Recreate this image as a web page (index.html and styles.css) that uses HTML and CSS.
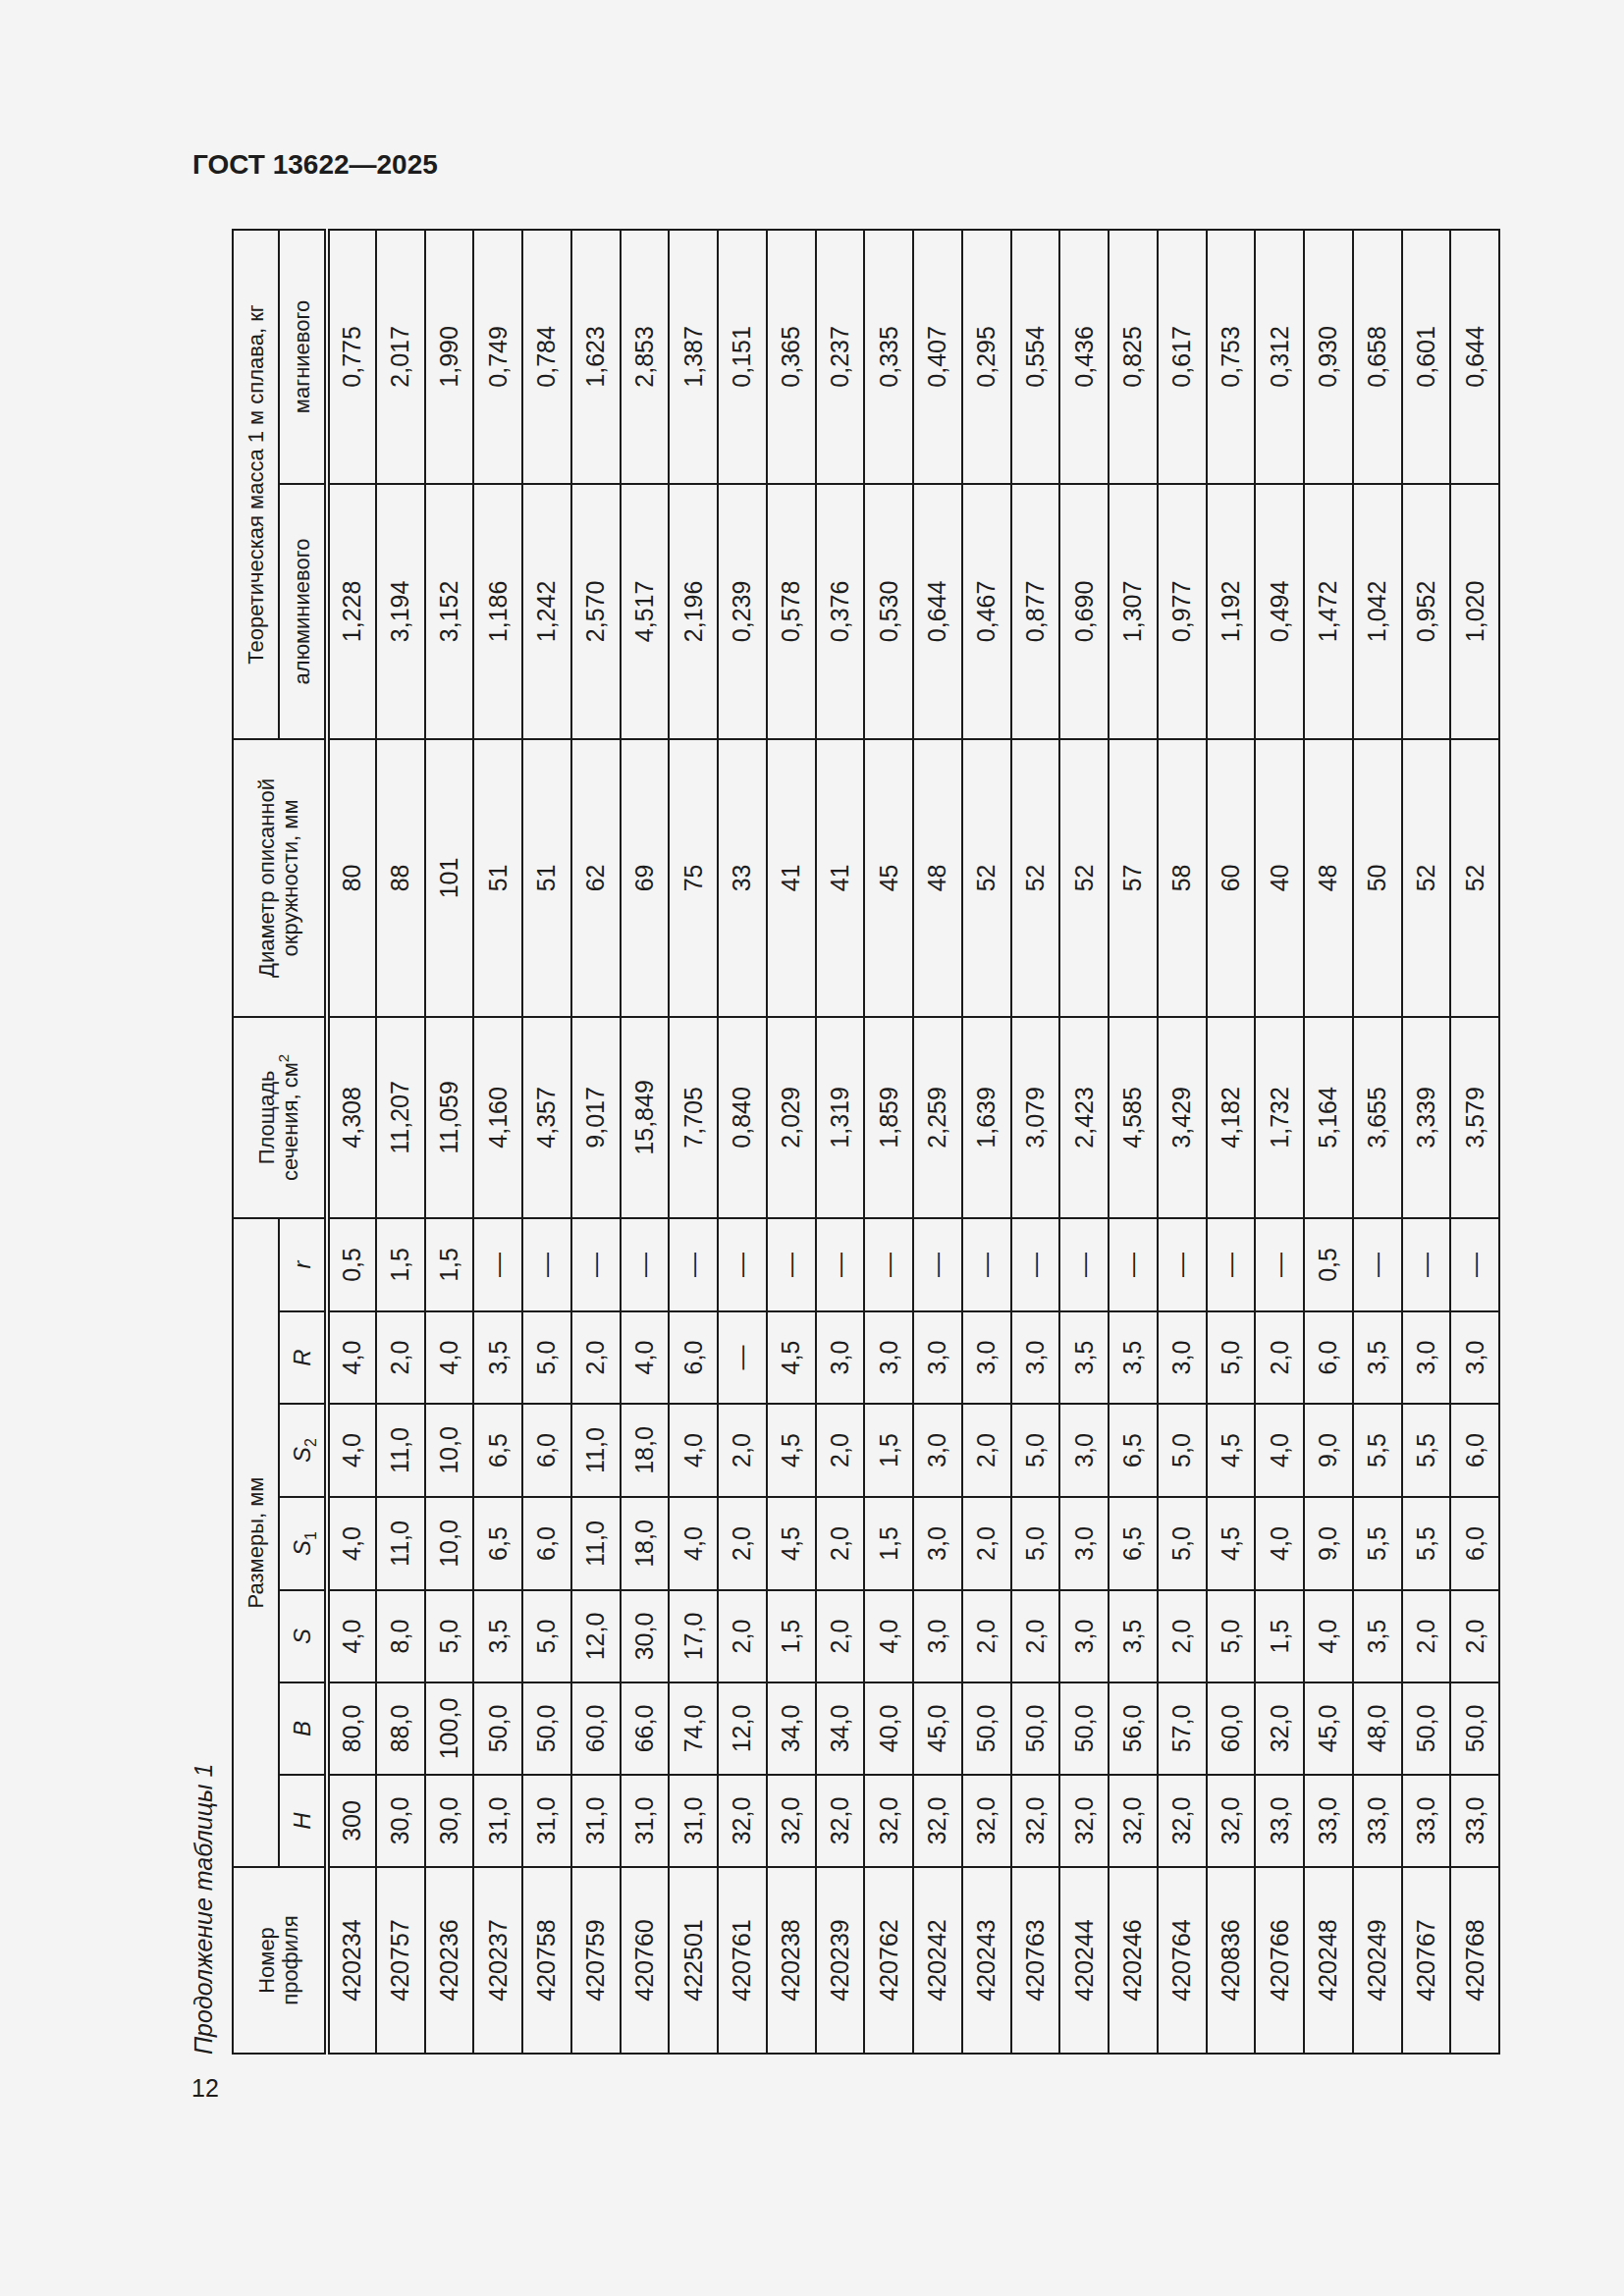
FILE: index.html
```html
<!DOCTYPE html>
<html lang="ru">
<head>
<meta charset="utf-8">
<title>ГОСТ 13622—2025</title>
<link rel="stylesheet" href="styles.css">
</head>
<body>
<div class="page">
  <h1 class="doc-title">ГОСТ 13622—2025</h1>
  <div class="rot-wrap">
    <div class="rot">
      <p class="caption">Продолжение таблицы 1</p>
      <table class="spec">
        <colgroup>
          <col class="c-num"><col class="c-d"><col class="c-d"><col class="c-d"><col class="c-d2"><col class="c-d2"><col class="c-d"><col class="c-d2">
          <col class="c-area"><col class="c-diam"><col class="c-al"><col class="c-mg">
        </colgroup>
        <thead>
          <tr class="h1">
            <th rowspan="2" class="dbl">Номер<br>профиля</th>
            <th colspan="7">Размеры, мм</th>
            <th rowspan="2" class="dbl">Площадь<br>сечения, см<sup>2</sup></th>
            <th rowspan="2" class="dbl">Диаметр описанной<br>окружности, мм</th>
            <th colspan="2">Теоретическая масса 1 м сплава, кг</th>
          </tr>
          <tr class="h2">
            <th class="sym dbl">H</th>
            <th class="sym dbl">B</th>
            <th class="sym dbl">S</th>
            <th class="sym dbl">S<sub>1</sub></th>
            <th class="sym dbl">S<sub>2</sub></th>
            <th class="sym dbl">R</th>
            <th class="sym dbl">r</th>
            <th class="dbl">алюминиевого</th>
            <th class="dbl">магниевого</th>
          </tr>
        </thead>
        <tbody>
          <tr><td>420234</td><td>300</td><td>80,0</td><td>4,0</td><td>4,0</td><td>4,0</td><td>4,0</td><td>0,5</td><td>4,308</td><td>80</td><td>1,228</td><td>0,775</td></tr>
          <tr><td>420757</td><td>30,0</td><td>88,0</td><td>8,0</td><td>11,0</td><td>11,0</td><td>2,0</td><td>1,5</td><td>11,207</td><td>88</td><td>3,194</td><td>2,017</td></tr>
          <tr><td>420236</td><td>30,0</td><td>100,0</td><td>5,0</td><td>10,0</td><td>10,0</td><td>4,0</td><td>1,5</td><td>11,059</td><td>101</td><td>3,152</td><td>1,990</td></tr>
          <tr><td>420237</td><td>31,0</td><td>50,0</td><td>3,5</td><td>6,5</td><td>6,5</td><td>3,5</td><td>—</td><td>4,160</td><td>51</td><td>1,186</td><td>0,749</td></tr>
          <tr><td>420758</td><td>31,0</td><td>50,0</td><td>5,0</td><td>6,0</td><td>6,0</td><td>5,0</td><td>—</td><td>4,357</td><td>51</td><td>1,242</td><td>0,784</td></tr>
          <tr><td>420759</td><td>31,0</td><td>60,0</td><td>12,0</td><td>11,0</td><td>11,0</td><td>2,0</td><td>—</td><td>9,017</td><td>62</td><td>2,570</td><td>1,623</td></tr>
          <tr><td>420760</td><td>31,0</td><td>66,0</td><td>30,0</td><td>18,0</td><td>18,0</td><td>4,0</td><td>—</td><td>15,849</td><td>69</td><td>4,517</td><td>2,853</td></tr>
          <tr><td>422501</td><td>31,0</td><td>74,0</td><td>17,0</td><td>4,0</td><td>4,0</td><td>6,0</td><td>—</td><td>7,705</td><td>75</td><td>2,196</td><td>1,387</td></tr>
          <tr><td>420761</td><td>32,0</td><td>12,0</td><td>2,0</td><td>2,0</td><td>2,0</td><td>—</td><td>—</td><td>0,840</td><td>33</td><td>0,239</td><td>0,151</td></tr>
          <tr><td>420238</td><td>32,0</td><td>34,0</td><td>1,5</td><td>4,5</td><td>4,5</td><td>4,5</td><td>—</td><td>2,029</td><td>41</td><td>0,578</td><td>0,365</td></tr>
          <tr><td>420239</td><td>32,0</td><td>34,0</td><td>2,0</td><td>2,0</td><td>2,0</td><td>3,0</td><td>—</td><td>1,319</td><td>41</td><td>0,376</td><td>0,237</td></tr>
          <tr><td>420762</td><td>32,0</td><td>40,0</td><td>4,0</td><td>1,5</td><td>1,5</td><td>3,0</td><td>—</td><td>1,859</td><td>45</td><td>0,530</td><td>0,335</td></tr>
          <tr><td>420242</td><td>32,0</td><td>45,0</td><td>3,0</td><td>3,0</td><td>3,0</td><td>3,0</td><td>—</td><td>2,259</td><td>48</td><td>0,644</td><td>0,407</td></tr>
          <tr><td>420243</td><td>32,0</td><td>50,0</td><td>2,0</td><td>2,0</td><td>2,0</td><td>3,0</td><td>—</td><td>1,639</td><td>52</td><td>0,467</td><td>0,295</td></tr>
          <tr><td>420763</td><td>32,0</td><td>50,0</td><td>2,0</td><td>5,0</td><td>5,0</td><td>3,0</td><td>—</td><td>3,079</td><td>52</td><td>0,877</td><td>0,554</td></tr>
          <tr><td>420244</td><td>32,0</td><td>50,0</td><td>3,0</td><td>3,0</td><td>3,0</td><td>3,5</td><td>—</td><td>2,423</td><td>52</td><td>0,690</td><td>0,436</td></tr>
          <tr><td>420246</td><td>32,0</td><td>56,0</td><td>3,5</td><td>6,5</td><td>6,5</td><td>3,5</td><td>—</td><td>4,585</td><td>57</td><td>1,307</td><td>0,825</td></tr>
          <tr><td>420764</td><td>32,0</td><td>57,0</td><td>2,0</td><td>5,0</td><td>5,0</td><td>3,0</td><td>—</td><td>3,429</td><td>58</td><td>0,977</td><td>0,617</td></tr>
          <tr><td>420836</td><td>32,0</td><td>60,0</td><td>5,0</td><td>4,5</td><td>4,5</td><td>5,0</td><td>—</td><td>4,182</td><td>60</td><td>1,192</td><td>0,753</td></tr>
          <tr><td>420766</td><td>33,0</td><td>32,0</td><td>1,5</td><td>4,0</td><td>4,0</td><td>2,0</td><td>—</td><td>1,732</td><td>40</td><td>0,494</td><td>0,312</td></tr>
          <tr><td>420248</td><td>33,0</td><td>45,0</td><td>4,0</td><td>9,0</td><td>9,0</td><td>6,0</td><td>0,5</td><td>5,164</td><td>48</td><td>1,472</td><td>0,930</td></tr>
          <tr><td>420249</td><td>33,0</td><td>48,0</td><td>3,5</td><td>5,5</td><td>5,5</td><td>3,5</td><td>—</td><td>3,655</td><td>50</td><td>1,042</td><td>0,658</td></tr>
          <tr><td>420767</td><td>33,0</td><td>50,0</td><td>2,0</td><td>5,5</td><td>5,5</td><td>3,0</td><td>—</td><td>3,339</td><td>52</td><td>0,952</td><td>0,601</td></tr>
          <tr><td>420768</td><td>33,0</td><td>50,0</td><td>2,0</td><td>6,0</td><td>6,0</td><td>3,0</td><td>—</td><td>3,579</td><td>52</td><td>1,020</td><td>0,644</td></tr>
        </tbody>
      </table>
    </div>
  </div>
  <div class="page-num">12</div>
</div>
</body>
</html>
```

FILE: styles.css
```css
* { box-sizing: border-box; }
html, body { margin: 0; padding: 0; background: #f4f4f4; }
body {
  width: 1654px;
  min-height: 2339px;
  font-family: "Liberation Sans", Arial, sans-serif;
  color: #1c1c1c;
}
.page { padding: 152px 0 0 194px; }
.doc-title {
  margin: 0 0 51px 2px;
  font-size: 28px;
  line-height: 32px;
  font-weight: bold;
}
.rot-wrap { width: 1336px; height: 1859px; }
.rot {
  width: 1858px;
  height: 1336px;
  transform-origin: 0 0;
  transform: translateY(1858px) rotate(-90deg);
}
.caption {
  margin: 0 0 16px 0;
  font-size: 25px;
  line-height: 26px;
  font-style: italic;
}
.spec {
  width: 1858px;
  height: 1291px;
  border-collapse: collapse;
  table-layout: fixed;
  font-size: 25px;
}
.c-num { width: 190px; }
.c-d { width: 94px; }
.c-d2 { width: 95px; }
.c-area { width: 205px; }
.c-diam { width: 283px; }
.c-al { width: 260px; }
.c-mg { width: 259px; }
.spec td, .spec th {
  border: 2px solid #1a1a1a;
  padding: 0;
  text-align: center;
  vertical-align: middle;
  font-weight: normal;
  white-space: nowrap;
  color: #1c1c1c;
}
.spec th { font-size: 22px; line-height: 24px; }
.spec th.sym { font-size: 24px; font-style: italic; }
.spec th.dbl { border-bottom: 6px double #1a1a1a; }
.spec sub { font-size: 16px; font-style: normal; vertical-align: -6px; line-height: 0; }
.spec sup { font-size: 15px; vertical-align: 9px; line-height: 0; }
.h1 { height: 47px; }
.h2 { height: 49px; }
.spec tbody tr { height: 49.75px; }
.page-num {
  margin: 18px 0 0 1px;
  font-size: 25px;
  line-height: 30px;
}
```
